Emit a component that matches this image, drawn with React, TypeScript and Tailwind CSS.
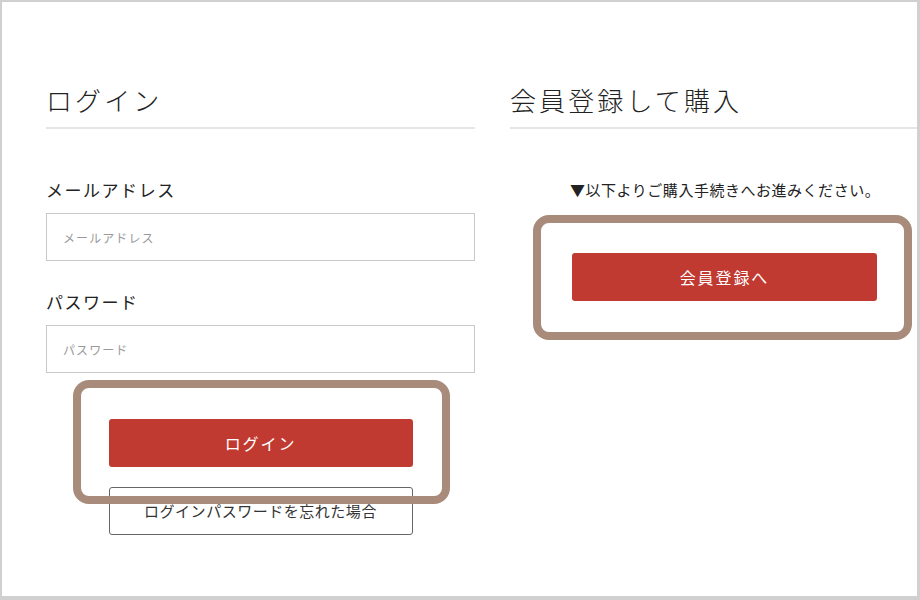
const jp = { fontFamily: '"Noto Sans CJK JP", "Noto Sans", sans-serif' }

function Highlight({ className }: { className: string }) {
  return (
    <div
      className={`absolute z-10 rounded-[16px] border-[8px] border-[#a88b7a] pointer-events-none ${className}`}
    ></div>
  )
}

function Field({ label, placeholder, labelTop }: any) {
  return (
    <div>
      <p className={`${labelTop} text-[17px] leading-[26px] tracking-[0.09em] text-[#222]`}>{label}</p>
      <input
        className="mt-[10px] block w-full h-[48px] border border-[#c8c8c8] px-4 text-[12px] tracking-[0.09em] placeholder:text-[#9a9a9a] outline-none"
        style={jp}
        placeholder={placeholder}
      />
    </div>
  )
}

export default function App() {
  return (
    <div
      className="w-[920px] h-[600px] bg-white border-t-2 border-l-2 border-r-[3px] border-b-4 border-[#d0d0d0] flex"
      style={jp}
    >
      {/* login */}
      <div className="ml-[44px] w-[429px]">
        <h2 className="pt-[78px] pb-[8px] text-[26px] leading-[39px] tracking-[0.12em] text-[#222] font-light border-b-2 border-[#e6e6e6]">
          ログイン
        </h2>
        <Field label="メールアドレス" placeholder="メールアドレス" labelTop="mt-[48px]" />
        <Field label="パスワード" placeholder="パスワード" labelTop="mt-[28px]" />
        <div className="flex flex-col items-center">
          <div className="relative mt-[46px]">
            <button className="w-[304px] h-[48px] rounded-[3px] bg-[#c13a31] text-white text-[16px] tracking-[0.12em]">
              ログイン
            </button>
            <Highlight className="-left-[36px] -top-[39px] w-[377px] h-[124px]" />
          </div>
          <button className="mt-[20px] w-[304px] h-[48px] rounded-[3px] border border-[#666] text-[#333] text-[15px] tracking-[0.035em]">
            ログインパスワードを忘れた場合
          </button>
        </div>
      </div>

      {/* register */}
      <div className="ml-[35px] flex-1">
        <h2 className="pt-[78px] pb-[8px] text-[26px] leading-[39px] tracking-[0.12em] text-[#222] font-light border-b-2 border-[#e6e6e6]">
          会員登録して購入
        </h2>
        <p className="mt-[49px] pl-[60px] text-[15px] leading-[24px] tracking-[0.035em] text-[#222]">
          ▼以下よりご購入手続きへお進みください。
        </p>
        <div className="relative mt-[51px] ml-[62px] w-[305px]">
          <button className="w-[305px] h-[48px] rounded-[3px] bg-[#c13a31] text-white text-[16px] tracking-[0.12em]">
            会員登録へ
          </button>
          <Highlight className="-left-[39px] -top-[38px] w-[379px] h-[125px]" />
        </div>
      </div>
    </div>
  )
}
